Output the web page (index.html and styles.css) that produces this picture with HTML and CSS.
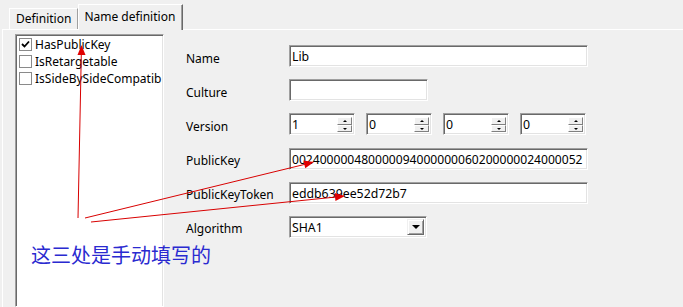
FILE: index.html
```html
<!DOCTYPE html>
<html lang="zh">
<head>
    <meta charset="UTF-8">
    <title>Name definition</title>
    <link rel="stylesheet" href="styles.css">
</head>
<body>

    <div class="window">
        <!-- вкладки -->
        <div class="tabs">
            <div class="tab">Definition</div>
            <div class="tab active">Name definition</div>
        </div>

        <div class="panel">
            <div class="listbox">
                <div class="item"><span class="check"><svg width="9" height="9" viewBox="0 0 9 9"><path d="M1 4 L3.5 6.5 L8 1.5" fill="none" stroke="#000" stroke-width="1.8"/></svg></span>HasPublicKey</div>
                <div class="item"><span class="check"></span>IsRetargetable</div>
                <div class="item"><span class="check"></span>IsSideBySideCompatib</div>
            </div>

            <div class="form">
                <span class="label">Name</span>
                <div class="field wide">Lib</div>

                <span class="label">Culture</span>
                <div class="field short"></div>

                <span class="label">Version</span>
                <div class="spins">
                    <div class="field spin"><span>1</span><span class="spin-btns"><span class="sbtn up"></span><span class="sbtn down"></span></span></div>
                    <div class="field spin"><span>0</span><span class="spin-btns"><span class="sbtn up"></span><span class="sbtn down"></span></span></div>
                    <div class="field spin"><span>0</span><span class="spin-btns"><span class="sbtn up"></span><span class="sbtn down"></span></span></div>
                    <div class="field spin"><span>0</span><span class="spin-btns"><span class="sbtn up"></span><span class="sbtn down"></span></span></div>
                </div>

                <span class="label">PublicKey</span>
                <div class="field wide key">002400000480000094000000060200000024000052</div>

                <span class="label">PublicKeyToken</span>
                <div class="field wide">eddb639ee52d72b7</div>

                <span class="label">Algorithm</span>
                <div class="field select"><span>SHA1</span><span class="drop"></span></div>
            </div>
        </div>

        <!-- пометки поверх скриншота -->
        <svg class="notes" width="683" height="307" viewBox="0 0 683 307">
            <g stroke="#d80000" stroke-width="1" fill="none">
                <line x1="78" y1="218" x2="81.3" y2="54"/>
                <line x1="85" y1="218" x2="305" y2="164.3"/>
                <line x1="91" y1="222" x2="336" y2="197"/>
            </g>
            <g fill="#e00000">
                <polygon points="81.5,45 77.5,55 85.5,55"/>
                <polygon points="314,162 305.25,168.3 303.35,160.5"/>
                <polygon points="345,196 335.46,201 334.64,193.04"/>
            </g>
        </svg>
        <div class="note-text">这三处是手动填写的</div>
    </div>

</body>
</html>
```
FILE: styles.css
```css
body {
    margin: 0;
    background-color: #f0f0f0;
    font-family: "Noto Sans", "Noto Sans CJK SC", sans-serif;
    font-size: 12px;
    color: #000;
}

.window {
    position: relative;
    width: 683px;
    height: 307px;
    overflow: hidden;
    display: flex;
    flex-direction: column;
}

.tabs {
    height: 29px;
    display: flex;
    align-items: flex-end;
    padding-left: 9px;
}

.tab {
    box-sizing: border-box;
    height: 21px;
    padding: 1px 6px 0 6px;
    border: 1px solid #ffffff;
    border-bottom: none;
    border-right-color: #a0a0a0;
    line-height: 18px;
}

.tab.active {
    height: 26px;
    margin-bottom: -1px;
    padding: 3px 7px 0 5px;
    background-color: #f0f0f0;
    border-right: 1px solid #696969;
    box-shadow: inset -1px 0 #a0a0a0;
    position: relative;
    z-index: 1;
}

.panel {
    flex: 1;
    display: flex;
    margin-left: 2px;
    border-top: 1px solid #ffffff;
    border-left: 1px solid #ffffff;
    min-height: 0;
}

.listbox {
    box-sizing: border-box;
    width: 149px;
    flex-shrink: 0;
    margin: 4px 0 0 12px;
    padding: 1px 0 0 3px;
    background-color: #fff;
    border: 1px solid;
    border-color: #a0a0a0 #ffffff #ffffff #a0a0a0;
    box-shadow: inset 1px 1px #696969, inset -1px 0 #e3e3e3;
    overflow: hidden;
    white-space: nowrap;
}

.item {
    height: 17px;
    display: flex;
    align-items: center;
}

.check {
    box-sizing: border-box;
    flex-shrink: 0;
    width: 13px;
    height: 13px;
    margin-right: 3px;
    border: 1px solid #8a8a8a;
    background-color: #fff;
    display: flex;
    align-items: center;
    justify-content: center;
}

.form {
    margin-left: 22px;
    padding-top: 15px;
    display: grid;
    grid-template-columns: 103px auto;
    grid-auto-rows: 22px;
    row-gap: 12.2px;
    align-content: start;
}

.label {
    align-self: center;
    padding-top: 4px;
}

.field {
    box-sizing: border-box;
    height: 22px;
    padding: 2px 2px;
    background-color: #fff;
    border: 1px solid;
    border-color: #a0a0a0 #ffffff #ffffff #a0a0a0;
    box-shadow: inset 1px 1px #696969, inset -1px -1px #e3e3e3;
    font-size: 12.3px;
    line-height: 17px;
    white-space: nowrap;
    overflow: hidden;
}

.field.wide {
    width: 299px;
}

.field.key {
    font-size: 12.1px;
}

.field.short {
    width: 139px;
}

.spins {
    display: flex;
    gap: 11px;
}

.field.spin {
    width: 66px;
    display: flex;
    justify-content: space-between;
    padding-right: 2px;
}

.spin-btns {
    width: 15px;
    display: flex;
    flex-direction: column;
    padding-top: 1px;
}

.sbtn {
    box-sizing: border-box;
    height: 8px;
    background-color: #f0f0f0;
    border: 1px solid;
    border-color: #ffffff #808080 #808080 #ffffff;
    display: flex;
    align-items: center;
    justify-content: center;
}

.sbtn::after {
    content: "";
    border-left: 2px solid transparent;
    border-right: 2px solid transparent;
}

.sbtn.up::after {
    border-bottom: 2px solid #000;
}

.sbtn.down::after {
    border-top: 2px solid #000;
}

.field.select {
    width: 138px;
    display: flex;
    justify-content: space-between;
    padding: 2px 2px 2px 2px;
}

.drop {
    box-sizing: border-box;
    width: 17px;
    height: 16px;
    background-color: #f0f0f0;
    border: 1px solid;
    border-color: #f0f0f0 #696969 #696969 #f0f0f0;
    box-shadow: inset 1px 1px #fff, inset -1px -1px #a0a0a0;
    display: flex;
    align-items: center;
    justify-content: center;
}

.drop::after {
    content: "";
    border-left: 4px solid transparent;
    border-right: 4px solid transparent;
    border-top: 4px solid #000;
}

.notes {
    position: absolute;
    left: 0;
    top: 0;
    pointer-events: none;
}

.note-text {
    position: absolute;
    left: 31px;
    top: 245px;
    font-family: "Noto Sans CJK SC", sans-serif;
    font-size: 20px;
    line-height: 20px;
    color: #2a2ad0;
    white-space: nowrap;
}
```
